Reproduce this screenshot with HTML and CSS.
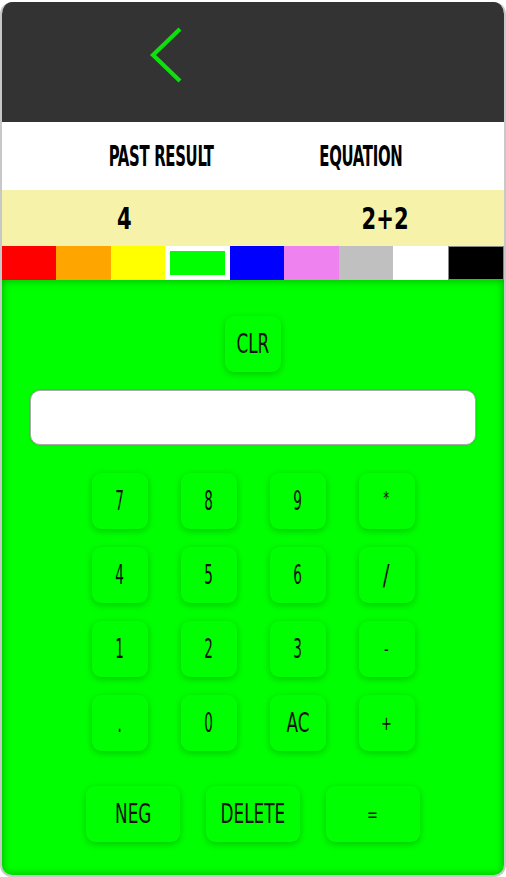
FILE: index.html
```html
<!DOCTYPE html>
<html>
<head>
<meta charset="utf-8">
<link rel="stylesheet" href="styles.css">
</head>
<body>
<div class="app">
  <header class="topbar">
    <svg class="back" width="40" height="60" viewBox="0 0 40 60">
      <polyline points="31,3 4,29 31,55" fill="none" stroke="#0ee00e" stroke-width="4.2"/>
    </svg>
  </header>
  <div class="labels">
    <span class="cell"><span class="label">PAST RESULT</span></span>
    <span class="cell"><span class="label">EQUATION</span></span>
  </div>
  <div class="values">
    <span class="cell"><span class="value">4</span></span>
    <span class="cell"><span class="value">2+2</span></span>
  </div>
  <div class="swatches">
    <div class="sw red"></div>
    <div class="sw orange"></div>
    <div class="sw yellow"></div>
    <div class="sw lime active"></div>
    <div class="sw blue"></div>
    <div class="sw violet"></div>
    <div class="sw silver"></div>
    <div class="sw white"></div>
    <div class="sw black"></div>
  </div>
  <main class="calc">
    <button class="key clr"><span class="t">CLR</span></button>
    <input class="display" type="text">
    <div class="grid">
      <button class="key"><span class="t num">7</span></button>
      <button class="key"><span class="t num">8</span></button>
      <button class="key"><span class="t num">9</span></button>
      <button class="key"><span class="t op star">*</span></button>
      <button class="key"><span class="t num">4</span></button>
      <button class="key"><span class="t num">5</span></button>
      <button class="key"><span class="t num">6</span></button>
      <button class="key"><span class="t slash">/</span></button>
      <button class="key"><span class="t num">1</span></button>
      <button class="key"><span class="t num">2</span></button>
      <button class="key"><span class="t num">3</span></button>
      <button class="key"><span class="t op">-</span></button>
      <button class="key"><span class="t num">.</span></button>
      <button class="key"><span class="t num">0</span></button>
      <button class="key"><span class="t">AC</span></button>
      <button class="key"><span class="t op">+</span></button>
    </div>
    <div class="bottom">
      <button class="key wide"><span class="t">NEG</span></button>
      <button class="key wide"><span class="t">DELETE</span></button>
      <button class="key wide"><span class="t op">=</span></button>
    </div>
  </main>
</div>
</body>
</html>
```

FILE: styles.css
```css
html, body {
  margin: 0;
  padding: 0;
  background: #ffffff;
}
.app {
  box-sizing: border-box;
  width: 506px;
  height: 875px;
  margin-top: 2px;
  border: 2px solid #c8c8c8;
  border-top: none;
  border-radius: 12px;
  overflow: hidden;
  display: flex;
  flex-direction: column;
  font-family: "DejaVu Sans Condensed", "DejaVu Sans", sans-serif;
}
.topbar {
  height: 120px;
  background: #333333;
  display: flex;
  align-items: flex-start;
  padding-left: 147px;
}
.back {
  margin-top: 24px;
}
.labels {
  height: 68px;
  background: #fff;
  display: grid;
  grid-template-columns: 200px 200px;
  padding-left: 59px;
  align-items: center;
}
.cell {
  text-align: center;
  white-space: nowrap;
}
.label {
  display: inline-block;
  font-weight: bold;
  font-size: 29px;
  color: #000;
  transform: scaleX(0.57);
  letter-spacing: -0.5px;
}
.values {
  height: 56px;
  background: #f7f2aa;
  display: grid;
  grid-template-columns: 200px 200px;
  column-gap: 61px;
  padding-left: 22px;
  align-items: center;
}
.value {
  display: inline-block;
  font-weight: bold;
  font-size: 30px;
  color: #000;
  transform: scaleX(0.78);
}
.swatches {
  height: 34px;
  display: flex;
}
.sw { flex: 1; box-sizing: border-box; }
.red { background: #ff0000; }
.orange { background: #ffa500; }
.yellow { background: #ffff00; }
.lime { background: #00ff00; }
.lime.active { border: 5px solid #ffffff; }
.blue { background: #0000ff; }
.violet { background: #ee82ee; }
.silver { background: #c0c0c0; }
.white { background: #ffffff; }
.black { background: #000000; border: 1px solid #888; }
.calc {
  flex: 1;
  background: #00ff00;
  box-shadow: inset 0 0 8px rgba(0, 0, 0, 0.35);
  display: flex;
  flex-direction: column;
  align-items: center;
  padding-top: 36px;
}
.key {
  box-sizing: border-box;
  width: 56px;
  height: 56px;
  border: none;
  border-radius: 9px;
  background: #00ff00;
  box-shadow: 0 2px 7px rgba(0, 0, 0, 0.22);
  display: flex;
  align-items: center;
  justify-content: center;
  padding: 0;
  font-family: inherit;
  font-size: 26px;
  color: #111;
}
.t {
  display: inline-block;
  transform: scaleX(0.72);
  white-space: nowrap;
}
.t.num { transform: scaleX(0.58); }
.t.op { font-size: 20px; }
.t.star { font-size: 18px; margin-top: -8px; }
.t.slash { transform: scaleX(0.8); font-size: 28px; }
.display {
  box-sizing: border-box;
  width: 446px;
  height: 55px;
  margin-top: 18px;
  border: 1px solid #aaa;
  border-radius: 10px;
  background: #fff;
  box-shadow: 0 0 2px rgba(0, 0, 0, 0.25);
}
.grid {
  margin-top: 28px;
  display: grid;
  grid-template-columns: repeat(4, 56px);
  column-gap: 33px;
  row-gap: 18px;
}
.bottom {
  margin-top: 35px;
  display: flex;
  gap: 26px;
}
.key.wide { width: 94px; }
```
